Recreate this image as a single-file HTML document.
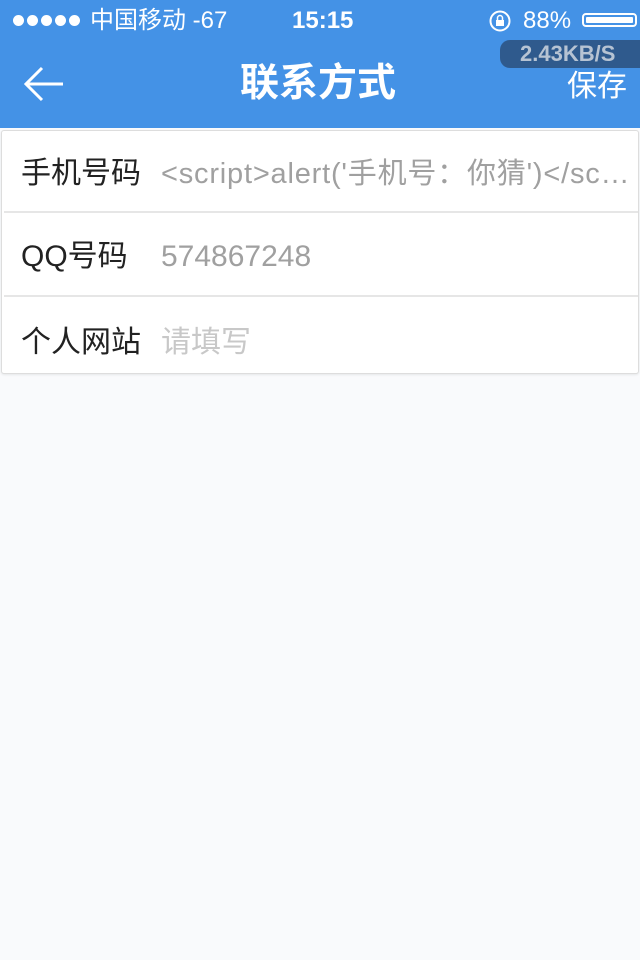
<!DOCTYPE html>
<html><head><meta charset="utf-8"><style>
*{margin:0;padding:0;box-sizing:border-box}
body{width:640px;height:960px;background:#f9fafc;font-family:"Liberation Sans","Noto Sans CJK SC",sans-serif;position:relative;overflow:hidden}
.hdr{position:absolute;left:0;top:0;width:640px;height:128px;background:#4492e6;color:#fff}
.abs{position:absolute;white-space:nowrap}
.card{position:absolute;left:1px;top:130px;width:638px;height:244px;background:#fff;border:1px solid #ddd;border-radius:3px;box-shadow:0 1px 2px rgba(0,0,0,.08)}
.row{position:absolute;left:0;width:636px;height:40px;line-height:40px;font-size:30px;color:#222}
.sep{position:absolute;left:2px;width:634px;height:2px;background:#e6e6e6}
.dot{position:absolute;top:15px;width:11px;height:11px;border-radius:50%;background:#fff}
</style></head><body>
<div class="hdr">
<div class="dot" style="left:13px"></div><div class="dot" style="left:27px"></div><div class="dot" style="left:41px"></div><div class="dot" style="left:55px"></div><div class="dot" style="left:69px"></div>
<div class="abs" style="left:90px;top:6px;font-size:24px;line-height:30px">中国移动 -67</div>
<div class="abs" style="left:292px;top:6px;font-size:24px;line-height:30px;font-weight:bold">15:15</div>
<svg class="abs" style="left:488px;top:9px" width="24" height="24"><circle cx="12" cy="12" r="9.5" fill="none" stroke="#fff" stroke-width="2"/><rect x="8" y="11" width="8" height="6" fill="#fff"/><path d="M9.5 11V9a2.5 2.5 0 0 1 5 0v2" fill="none" stroke="#fff" stroke-width="1.5"/></svg>
<div class="abs" style="left:523px;top:6px;font-size:24px;line-height:30px">88%</div>
<div class="abs" style="left:582px;top:13px;width:55px;height:14px;border:2px solid #fff;border-radius:4px;padding:2px"><div style="width:100%;height:100%;background:#fff;border-radius:1px"></div></div>
<div class="abs" style="left:500px;top:40px;width:140px;height:28px;background:#2f5a8d;border-radius:10px 0 0 10px;color:#b6c3d3;font-size:22px;font-weight:bold;line-height:28px;padding-left:20px">2.43KB/S</div>
<svg class="abs" style="left:22px;top:66px" width="44" height="36"><path d="M41 18H4M20 2L4 18l16 16" fill="none" stroke="#fff" stroke-width="3"/></svg>
<div class="abs" style="left:240px;top:62px;font-size:39px;line-height:44px;font-weight:bold">联系方式</div>
<div class="abs" style="left:567px;top:69px;font-size:30px;line-height:36px">保存</div>
</div>
<div class="card">
<div class="row" style="top:23px"><span class="abs" style="left:19px">手机号码</span><span class="abs" style="left:159px;color:#a0a0a0;font-size:29px;letter-spacing:0.8px">&lt;script&gt;alert('手机号：你猜')&lt;/sc…</span></div>
<div class="sep" style="top:80px"></div>
<div class="row" style="top:106px"><span class="abs" style="left:19px">QQ号码</span><span class="abs" style="left:159px;color:#a0a0a0">574867248</span></div>
<div class="sep" style="top:164px"></div>
<div class="row" style="top:192px"><span class="abs" style="left:19px">个人网站</span><span class="abs" style="left:159px;color:#c8c8c8">请填写</span></div>
</div>
</body></html>
